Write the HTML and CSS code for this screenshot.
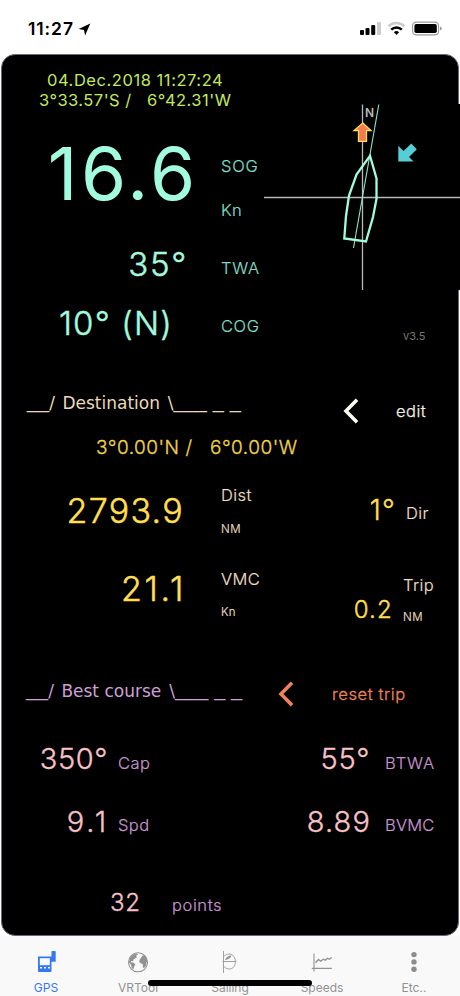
FILE: index.html
```html
<!DOCTYPE html>
<html lang="en">
<head>
<meta charset="utf-8">
<title>GPS</title>
<link rel="stylesheet" href="styles.css">
</head>
<body>
<div class="phone">
  <header class="status">
    <span class="clock">11:27</span>
    <svg class="loc" width="13" height="13" viewBox="0 0 13 13"><path d="M12.3.4.6 5.9 6 6.9l1.1 5.5z" fill="#000"/></svg>
    <svg class="signals" width="82" height="15" viewBox="0 0 82 15">
      <rect x="0" y="9" width="4" height="5" rx="1"/><rect x="5.5" y="7" width="4" height="7" rx="1"/><rect x="11.2" y="4" width="4" height="10" rx="1"/><rect x="17" y="1" width="4" height="13" rx="1" fill="#ccc"/>
      <path d="M28.5 5.2a11.5 11.5 0 0 1 16 0" fill="none" stroke="#ccc" stroke-width="2.5"/>
      <path d="M31.2 8.6a7.6 7.6 0 0 1 10.6 0" fill="none" stroke="#000" stroke-width="2.5"/>
      <path d="M33.9 11.2a3.8 3.8 0 0 1 5.2 0l-2.6 2.8z"/>
      <rect x="52.6" y="1.1" width="26" height="12.8" rx="3.6" fill="none" stroke="#999" stroke-width="1.1"/>
      <rect x="54.4" y="3" width="22.4" height="9" rx="1.8"/>
      <path d="M80 5.6q1.8.6 1.8 2t-1.8 2z" fill="#999"/>
    </svg>
  </header>

  <main class="panel">
    <section class="nav">
      <div class="col nav-values">
        <div class="date">04.Dec.2018 11:27:24</div>
        <div class="position">3°33.57'S /   6°42.31'W</div>
        <div class="sog">16.6</div>
        <div class="twa">35°</div>
        <div class="cog">10° (N)</div>
      </div>
      <div class="col nav-labels label">
        <div class="l-sog">SOG</div>
        <div class="l-kn">Kn</div>
        <div class="l-twa">TWA</div>
        <div class="l-cog">COG</div>
      </div>
      <div class="col compass">
        <svg width="196" height="186" viewBox="264 104 196 186">
          <rect x="264" y="104" width="196" height="186" fill="#000"/>
          <path d="M362.5 104.500V290M264 197.500H460" stroke="#b9b9b9" stroke-width="1.3" fill="none"/>
          <path d="M378.800 104.500 353.500 248" stroke="#8fe8cf" stroke-width="1.1"/>
          <path d="M370 155.800 376.500 178.500V199L373 217 366 241.500 344.300 238.500 346 216 349 195.500 356.500 174.500Z" fill="none" stroke="#a2fbdf" stroke-width="2.3"/>
          <path d="M362.800 123 371 130.500H366.500V141.300H358.500V130.500H354Z" fill="#f47a55" stroke="#ffe046" stroke-width="1.3"/>
          <path d="M398.300 145.800V161.500H413.600L409 157 416.800 149.300 411.300 143.600 403.500 151Z" fill="#57cdd6"/>
          <text class="north" x="365" y="117">N</text>
        </svg>
        <div class="version">v3.5</div>
      </div>
    </section>

    <section class="dest">
      <div class="heading">
        <h2 class="tab-title"><span class="rule">__</span>/ <span class="word">Destination</span> \<span class="rule">___ _ _</span></h2>
        <svg class="chev" width="16" height="26" viewBox="0 0 16 26"><path d="M14 1.800 3 13 14 24.200" fill="none" stroke="#fffff0" stroke-width="3.600"/></svg>
        <span class="edit">edit</span>
      </div>
      <div class="dest-pos">3°0.00'N /   6°0.00'W</div>
      <div class="dest-grid">
        <div class="col dest-values">
          <div class="dist">2793.9</div>
          <div class="vmc">21.1</div>
        </div>
        <div class="col dest-labels label">
          <div class="l-dist">Dist</div>
          <div class="l-nm small">NM</div>
          <div class="l-vmc">VMC</div>
          <div class="l-vkn small">Kn</div>
        </div>
        <div class="col side-values">
          <div class="dir">1°</div>
          <div class="trip">0.2</div>
        </div>
        <div class="col side-labels label">
          <div class="l-dir">Dir</div>
          <div class="l-trip">Trip</div>
          <div class="l-tnm small">NM</div>
        </div>
      </div>
    </section>

    <section class="best">
      <div class="heading">
        <h2 class="tab-title"><span class="rule">__</span>/ <span class="word">Best course</span> \<span class="rule">___ _ _</span></h2>
        <svg class="chev" width="16" height="26" viewBox="0 0 16 26"><path d="M14 1.800 3 13 14 24.200" fill="none" stroke="#ee8358" stroke-width="3.600"/></svg>
        <span class="reset">reset trip</span>
      </div>
      <div class="best-grid">
        <div class="col best-values">
          <div class="cap">350°</div>
          <div class="spd">9.1</div>
        </div>
        <div class="col best-labels label">
          <div class="l-cap">Cap</div>
          <div class="l-spd">Spd</div>
        </div>
        <div class="col best-values-b">
          <div class="btwa">55°</div>
          <div class="bvmc">8.89</div>
        </div>
        <div class="col best-labels-b label">
          <div class="l-btwa">BTWA</div>
          <div class="l-bvmc">BVMC</div>
        </div>
      </div>
      <div class="points"><span class="count">32</span><span class="label">points</span></div>
    </section>
  </main>

  <nav class="tabs">
    <div class="tab active">
      <svg width="24" height="24" viewBox="0 0 24 24"><path d="M4 6.500h13.500v14.500a1 1 0 0 1-1 1H5a1 1 0 0 1-1-1zM17.500 1.700q0-.8.800-.8h2.600q.8 0 .8.800v10h-4.200z" fill="#3478f6"/><path d="M5.800 8.200h10v7H5.800z" fill="#f9f9f9"/><path d="M6 17.800h2M10 17.800h2M14 17.800h2" stroke="#f9f9f9" stroke-width="1.500"/></svg>
      <span>GPS</span>
    </div>
    <div class="tab">
      <svg width="24" height="24" viewBox="0 0 24 24"><circle cx="12" cy="12.300" r="9.500" fill="none" stroke="#929292" stroke-width="1.100"/><path d="M3.500 8.500 6.500 5l4.200-1.400 1.300 1.200-2 1 .8 1.600-3.200 1.800-.4 2-2-.3-.4 1.300 3 .6 1.500 1.600-1.200 2.300-.8 2.600-1.600-1-.6-3.400-2-2.300zM14.500 8.500l2-2.800 1.800-.4 2.200 2.800 1 3.400-1 .8-.3 3.200-2.200 2.600-1.200-.7.200-3-1.800-.8-1.800-1.200.1-2.300z" fill="#929292"/></svg>
      <span>VRTool</span>
    </div>
    <div class="tab">
      <svg width="24" height="24" viewBox="0 0 24 24"><g fill="none" stroke="#a0a0a0" stroke-width="1"><path d="M5.500 1v22M4.500 11.500H18.500M5.500 6.500C9 3.500 13 3.300 15 5.500c2 2 2.600 5 2.200 8-.5 3.200-2.700 5.500-5.700 5.500-2.500 0-4.500-1-6-3"/></g><path d="M7 10C8 7 10.500 5.500 13.500 5.500 13 8 10 9.500 7 10z" fill="#929292"/></svg>
      <span>Sailing</span>
    </div>
    <div class="tab">
      <svg width="24" height="24" viewBox="0 0 24 24"><g fill="none" stroke="#929292" stroke-width="1.100"><path d="M4 3.500v18M1.800 18.400h20"/><path d="M5.500 12.800 8.500 9.500l2.200 1.700 2.500-2 2.200 1 2-2 1.800 1 2.500-1.700" stroke-width="1.300"/></g></svg>
      <span>Speeds</span>
    </div>
    <div class="tab">
      <svg width="24" height="24" viewBox="0 0 24 24"><g fill="#8c8c8c"><circle cx="12" cy="4.600" r="2.700"/><circle cx="12" cy="11.900" r="2.700"/><circle cx="12" cy="19.200" r="2.700"/></g></svg>
      <span>Etc..</span>
    </div>
    <div class="home"></div>
  </nav>
</div>
</body>
</html>
```
FILE: styles.css
```css
* { box-sizing: border-box; margin: 0; padding: 0; }
body { width: 460px; height: 996px; background: #fff; font-family: Inter, "Liberation Sans", sans-serif; font-weight: 400; overflow: hidden; }
.phone { display: flex; flex-direction: column; height: 996px; }
.status { height: 54px; display: flex; align-items: flex-start; padding: 20px 18px 0 28px; }
.clock { font-size: 17.5px; line-height: 17px; font-weight: 600; width: 50px; letter-spacing: 0.9px; }
.loc { margin-top: 3px; }
.signals { margin: 1px 0 0 auto; width: 82px; flex: none; }

.panel { flex: none; width: 458px; height: 882px; margin: 0 1px; background: #000; border: 1px solid #6a6a7c; border-radius: 14px; display: flex; flex-direction: column; }
.col { display: flex; flex-direction: column; flex: none; }
.label { font-size: 16.5px; font-weight: 300; letter-spacing: 0.4px; -webkit-text-stroke: 0.2px currentColor; }
.small { font-size: 11.5px; }

.nav { display: flex; height: 301px; }
.nav-values { width: 219px; padding-top: 15px; white-space: pre; }
.date, .position { font-size: 16.5px; line-height: 20px; color: #c2e85f; font-weight: 400; }
.date { padding-left: 45px; letter-spacing: 0.55px; }
.position { padding-left: 37px; line-height: 21px; letter-spacing: 0.47px; }
.sog, .twa, .cog { color: #a2fbdf; text-align: right; }
.sog { font-size: 73px; line-height: 126px; padding-right: 22px; letter-spacing: 3.6px; font-weight: 400; }
.twa, .cog { font-size: 33px; font-weight: 300; -webkit-text-stroke: 0.5px currentColor; }
.twa { line-height: 54px; padding-right: 33px; letter-spacing: 1.7px; }
.cog { line-height: 64px; padding-right: 48px; letter-spacing: 1.2px; }
.nav-labels { width: 43px; padding-top: 89px; color: #7fdcc4; }
.l-sog, .l-kn { line-height: 44px; }
.l-sog, .l-twa { letter-spacing: 0.8px; }
.l-twa { line-height: 73px; }
.l-cog { line-height: 42px; letter-spacing: 0.6px; }
.compass { width: 196px; padding-top: 49px; }
.compass svg { display: block; flex: none; }
.north { font-size: 12px; font-weight: 600; fill: #b9b9b9; }
.version { font-size: 11px; line-height: 92px; padding-left: 139px; color: #777; }

.heading { display: flex; height: 50px; align-items: flex-start; }
.tab-title { font: 400 17px/20px "DejaVu Sans", sans-serif; white-space: pre; flex: none; }
.rule { font-family: "Liberation Sans", sans-serif; font-size: 20px; line-height: 1px; vertical-align: 1.5px; word-spacing: 0.3px; }
.word { margin: 0 2.5px 0 2px; }
.chev { flex: none; display: block; }

.dest { height: 289px; padding-top: 37px; }
.dest .tab-title { width: 317px; padding-left: 25px; color: #ecd9b9; }
.dest .chev { margin: 5px 0 0 24px; }
.edit { font-size: 16.5px; line-height: 36px; padding-left: 37px; color: #f4f0e4; font-weight: 300; letter-spacing: 0.5px; -webkit-text-stroke: 0.25px currentColor; }
.dest-pos { font-size: 19px; line-height: 10px; padding-left: 94px; color: #f3d24c; white-space: pre; font-weight: 300; letter-spacing: 0.5px; -webkit-text-stroke: 0.3px currentColor; }
.dest-grid { display: flex; }
.dest-values { width: 219px; padding-top: 20px; color: #ffdf4f; text-align: right; font-weight: 300; -webkit-text-stroke: 0.5px currentColor; }
.dist { font-size: 34px; line-height: 76px; padding-right: 37px; letter-spacing: 1.3px; }
.vmc { font-size: 34px; line-height: 79px; padding-right: 35px; letter-spacing: 2.7px; }
.dest-labels { width: 119px; padding-top: 25px; color: #ecdfc4; }
.l-dist { line-height: 34px; }
.l-nm { line-height: 34px; }
.l-vmc { line-height: 66px; }
.l-vkn { line-height: 0; }
.side-values { width: 54px; padding-top: 19px; color: #ffdf4f; text-align: right; font-weight: 300; -webkit-text-stroke: 0.45px currentColor; }
.dir { font-size: 28px; line-height: 76px; letter-spacing: 1.2px; margin-right: -2px; }
.trip { font-size: 24px; line-height: 124px; letter-spacing: 1.2px; padding-right: 1px; }
.side-labels { padding: 35px 0 0 9px; color: #ecdfc4; }
.l-dir { line-height: 50px; padding-left: 3px; }
.l-trip { line-height: 64px; margin-top: 15px; }
.l-tnm { line-height: 0; }

.best { padding-top: 36px; }
.best .tab-title { width: 276px; padding-left: 24px; color: #cf9fd6; }
.best .chev { flex: none; }
.reset { font-size: 16.5px; line-height: 27px; padding-left: 38px; color: #ee8358; font-weight: 300; letter-spacing: 0.6px; -webkit-text-stroke: 0.3px currentColor; }
.best-grid { display: flex; height: 134px; }
.best-values, .best-values-b { color: #f9c0c8; text-align: right; font-size: 29px; font-weight: 300; letter-spacing: 0.6px; -webkit-text-stroke: 0.35px currentColor; }
.best-values { width: 106px; }
.cap, .btwa { line-height: 55px; }
.spd, .bvmc { line-height: 72px; }
.spd { letter-spacing: 2.8px; margin-right: -1px; }
.bvmc { letter-spacing: 1.1px; margin-right: -1px; }
.best-labels { width: 150px; padding: 7px 0 0 10px; color: #c795d0; }
.l-cap, .l-btwa { line-height: 50px; }
.l-spd, .l-bvmc { line-height: 74px; }
.l-btwa { letter-spacing: 0.9px; }
.l-bvmc { letter-spacing: 0.2px; }
.best-values-b { width: 112px; }
.best-labels-b { padding: 7px 0 0 15px; color: #c795d0; }
.points { display: flex; line-height: 75px; padding-left: 108px; color: #c795d0; }
.count { font-size: 24px; color: #f9c0c8; width: 62px; font-weight: 300; letter-spacing: 0.6px; -webkit-text-stroke: 0.3px currentColor; }
.points .label { line-height: 80px; letter-spacing: 0.6px; }

.tabs { position: relative; flex: none; height: 60px; background: #f9f9f9; display: flex; padding-top: 14px; }
.tab { flex: 1; display: flex; flex-direction: column; align-items: center; font-size: 12px; line-height: 16px; color: #929292; }
.tab svg { display: block; margin-bottom: 6px; }
.tab.active { color: #3478f6; }
.home { position: absolute; left: 148px; top: 44px; width: 164px; height: 6px; border-radius: 3px; background: #000; }
```
